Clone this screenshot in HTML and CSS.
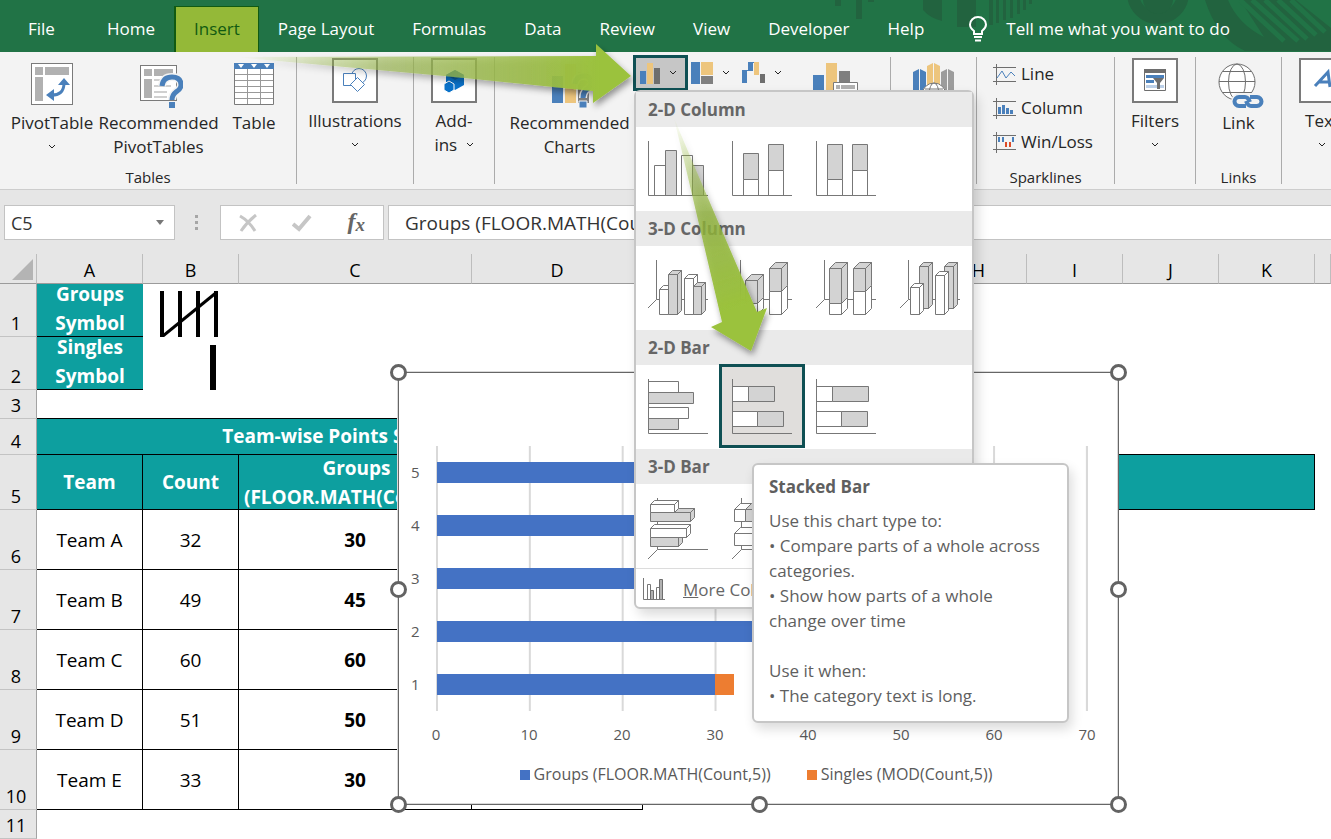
FILE: index.html
```html
<!DOCTYPE html>
<html lang="en">
<head>
<meta charset="UTF-8">
<meta name="viewport" content="width=device-width, initial-scale=1.0">
<title>Team-wise Points</title>
<link rel="stylesheet" href="styles.css">
</head>
<body>
<header class="tabs">
    <svg class="tabs-art" width="511" height="52" viewBox="0 0 511 52">
        <g fill="#22633f">
            <path d="M15 0h6v6h-6zM36 0h6v19h-6zM48 0h6v2h-6zM103 0h19v21q-12-3-19-11zM137 0h19v27h-19zM169 0h4v25h-4zM176 0h3v23h-3zM183 0h3v20h-3zM190 0h3v18h-3zM197 0h3v14h-3zM203 0h3v10h-3zM209 0h3v4h-3z"/>
            <path d="M385 0q12 38 40 51h86V0z"/>
        </g>
        <circle cx="338" cy="-7" r="25" fill="none" stroke="#22633f" stroke-width="12"/>
        <circle cx="338" cy="-1" r="15" fill="#22633f"/>
        <path d="M408 0q10 24 36 37L420 0z" fill="#217346"/>
        <path d="M420 0l44 41M432 0l46 41M445 0l42 39M458 0l38 35M471 0l34 32" stroke="#217346" stroke-width="5"/>
        <path d="M476 0h35v28z" fill="#217346"/>
    </svg>
    <nav class="tab-list">
        <button class="tab tab-file">File</button>
        <button class="tab">Home</button>
        <button class="tab active">Insert</button>
        <button class="tab">Page Layout</button>
        <button class="tab">Formulas</button>
        <button class="tab">Data</button>
        <button class="tab">Review</button>
        <button class="tab">View</button>
        <button class="tab">Developer</button>
        <button class="tab">Help</button>
    </nav>
    <button class="tell-me">
        <svg width="20" height="26" viewBox="0 0 20 26" fill="none" stroke="#fff" stroke-width="2"><path d="M6 18v-3Q2 12 2 8.500a8 7.500 0 0 1 16 0Q18 12 14 15v3z"/><path d="M6 21h8M7 24.500h6"/></svg>
        Tell me what you want to do
    </button>
</header>

<section class="ribbon">
    <div class="group group-tables">
        <div class="tools">
            <button class="tool pivot">
                <svg width="42" height="42" viewBox="0 0 42 42"><rect x=".5" y=".5" width="41" height="41" fill="#fff" stroke="#7a7a7a"/><path d="M4 4h8v8H4zM14 4h24v8H14zM4 14h8v24H4z" fill="#b1b1b1"/><path d="M19 32q14 1 14-12" fill="none" stroke="#4a80bb" stroke-width="3"/><path d="M15 32l8-6v12zM27 22l6-7 6 7z" fill="#4a80bb"/></svg>
                <span>PivotTable</span>
                <svg class="chev" width="8" height="6" viewBox="0 0 8 6"><path d="M1 1l3 3 3-3"/></svg>
            </button>
            <button class="tool rec-pivot">
                <svg width="44" height="46" viewBox="0 0 44 46"><rect x="1.500" y="2.500" width="36" height="35" fill="#fff" stroke="#7a7a7a"/><path d="M5 6h8v7H5zM15 6h19v7H15zM5 16h8v19H5z" fill="#b1b1b1"/><path d="M15 17h14M15 23h17M15 29h13M15 34h13" stroke="#d0d0d0" stroke-width="2"/><path d="M23 23q1-9 10-9t9 8q0 4-5 7-4 3-4 8" fill="none" stroke="#f3f3f3" stroke-width="8"/><path d="M23 23q1-9 10-9t9 8q0 4-5 7-4 3-4 8" fill="none" stroke="#4a80bb" stroke-width="5"/><path d="M30 39h6v6h-6z" fill="#4a80bb"/></svg>
                <span>Recommended<br>PivotTables</span>
            </button>
            <button class="tool table-tool">
                <svg width="40" height="42" viewBox="0 0 40 42"><path d="M.5 5.500h39v36H.5z" fill="#fff" stroke="#7a7a7a"/><path d="M13.500 6v35M26.500 6v35M1 11.500h38M1 17.500h38M1 23.500h38M1 29.500h38M1 35.500h38" stroke="#999"/><path d="M0 0h40v6H0z" fill="#4a80bb"/><path d="M4 1h6L7 5zM17 1h6l-3 4zM30 1h6l-3 4z" fill="#fff"/></svg>
                <span>Table</span>
            </button>
        </div>
        <div class="group-name">Tables</div>
    </div>
    <div class="group group-illus">
        <button class="tool boxed">
            <svg width="46" height="45" viewBox="0 0 46 45"><path d="M1 1h44v43H1z" fill="#fff" stroke="#7a7a7a" stroke-width="2"/><g fill="#fff" stroke="#4a80bb"><circle cx="27" cy="18" r="7.500"/><path d="M11.500 15.500h12v12h-12z"/><path d="M25.500 19.500l7 7-7 7-7-7z"/></g></svg>
            <span>Illustrations</span>
            <svg class="chev" width="8" height="6" viewBox="0 0 8 6"><path d="M1 1l3 3 3-3"/></svg>
        </button>
    </div>
    <div class="group group-addins">
        <button class="tool boxed">
            <svg width="46" height="45" viewBox="0 0 46 45"><path d="M1 1h44v43H1z" fill="#fff" stroke="#7a7a7a" stroke-width="2"/><path d="M24 12l9 5v10l-9 5-9-5V17z" fill="#0a72c9"/><path d="M24 12l9 5-9 5-9-5z" fill="#0c5c9c"/><path d="M18 23l5 3v6l-5 3-5-3v-6z" fill="#0a72c9" stroke="#fff"/></svg>
            <span>Add-<br>ins <svg class="chev" width="8" height="6" viewBox="0 0 8 6"><path d="M1 1l3 3 3-3"/></svg></span>
        </button>
    </div>
    <div class="group group-charts">
        <div class="tools">
            <button class="tool rec-charts">
                <svg width="40" height="46" viewBox="0 0 40 46"><path d="M0 13h11v27H0z" fill="#4a80bb"/><path d="M13 1h11v39H13z" fill="#edc57d"/><path d="M26 9h11v31H26z" fill="#7f7f7f"/><path d="M23 21q1-8 9-8 7 0 7 7 0 4-5 7-3 3-3 8" fill="none" stroke="#f3f3f3" stroke-width="8"/><path d="M23 21q1-8 9-8 7 0 7 7 0 4-5 7-3 3-3 8" fill="none" stroke="#4a80bb" stroke-width="5"/><path d="M27 38h8v7h-8z" fill="#4a80bb" stroke="#f3f3f3"/></svg>
                <span>Recommended<br>Charts</span>
            </button>
            <button class="mini-tool open" aria-label="Insert Column or Bar Chart">
                <svg width="20" height="21" viewBox="0 0 20 21"><path d="M0 8h6v13H0z" fill="#4a80bb"/><path d="M7 0h6v21H7z" fill="#edc57d"/><path d="M14 5h6v16h-6z" fill="#6e6e6e"/></svg>
                <svg class="chev" width="8" height="6" viewBox="0 0 8 6"><path d="M1 1l3 3 3-3"/></svg>
            </button>
            <button class="mini-tool" aria-label="Insert Hierarchy Chart">
                <svg width="22" height="22" viewBox="0 0 22 22"><path d="M0 0h9v22H0z" fill="#4a80bb"/><path d="M10 0h12v13H10z" fill="#edc57d"/><path d="M10 14h12v8H10z" fill="#7f7f7f"/></svg>
                <svg class="chev" width="8" height="6" viewBox="0 0 8 6"><path d="M1 1l3 3 3-3"/></svg>
            </button>
            <button class="mini-tool" aria-label="Insert Waterfall Chart">
                <svg width="23" height="22" viewBox="0 0 23 22"><path d="M0 8h5v13H0zM6 0h5v9H6zM4 8h3v1H4zM10 0h3v1h-3z" fill="#4a80bb"/><path d="M12 0h5v13h-5z" fill="#edc57d"/><path d="M18 12h5v9h-5z" fill="#6e6e6e"/></svg>
                <svg class="chev" width="8" height="6" viewBox="0 0 8 6"><path d="M1 1l3 3 3-3"/></svg>
            </button>
            <button class="tool pivot-chart" aria-label="PivotChart">
                <svg width="45" height="42" viewBox="0 0 45 42"><path d="M0 12h11v29H0z" fill="#4a80bb"/><path d="M13 0h11v41H13z" fill="#edc57d"/><path d="M26 8h11v12H26z" fill="#7f7f7f"/><path d="M20.500 19.500h24v22h-24z" fill="#fff" stroke="#7a7a7a"/><path d="M23 22h4v4h-4zM28 22h14v4H28z" fill="#b1b1b1"/></svg>
            </button>
        </div>
    </div>
    <div class="group group-tours">
        <button class="tool map-tool" aria-label="3D Map">
            <svg width="42" height="44" viewBox="0 0 42 44"><path d="M0 9l6-3v34H0zM7 6l6 3v31H7z" fill="#4a80bb"/><path d="M14 3l6-3v40h-6zM21 0l6 3v37h-6z" fill="#edc57d"/><path d="M28 9l6-3v34h-6zM35 6l6 3v31h-6z" fill="#9c9c9c"/><circle cx="21" cy="32" r="12" fill="#fff" stroke="#7a7a7a"/><ellipse cx="21" cy="32" rx="5" ry="12" fill="none" stroke="#7a7a7a"/><path d="M12 26h18" stroke="#7a7a7a"/></svg>
        </button>
    </div>
    <div class="group group-spark">
        <div class="spark-list">
            <button class="spark">
                <svg width="23" height="21" viewBox="0 0 23 21" fill="none"><path d="M3.500 0v21M0 3.500h23M0 17.500h23" stroke="#6e6e6e"/><path d="M4 14l5-7 4 7 5-6 4 4" stroke="#4a80bb"/></svg>
                <span>Line</span>
            </button>
            <button class="spark">
                <svg width="23" height="21" viewBox="0 0 23 21"><path d="M3.500 0v21M0 3.500h23M0 17.500h23" stroke="#6e6e6e"/><path d="M5 9h3v7H5zM9 7h3v9H9zM13 10h3v6h-3zM17 12h3v4h-3z" fill="#4a80bb"/></svg>
                <span>Column</span>
            </button>
            <button class="spark">
                <svg width="23" height="21" viewBox="0 0 23 21"><path d="M3.500 0v21M0 3.500h23M0 17.500h23" stroke="#6e6e6e"/><path d="M5 5h2v5H5zM9 5h2v5H9zM19 5h2v5h-2z" fill="#4a80bb"/><path d="M12 10h2v5h-2zM16 10h2v5h-2z" fill="#dd4b27"/></svg>
                <span>Win/Loss</span>
            </button>
        </div>
        <div class="group-name">Sparklines</div>
    </div>
    <div class="group group-filters">
        <button class="tool boxed">
            <svg width="46" height="45" viewBox="0 0 46 45"><path d="M1 1h44v43H1z" fill="#fff" stroke="#7a7a7a" stroke-width="2"/><path d="M12.500 11.500h21v21h-21z" fill="#fff" stroke="#6e6e6e"/><path d="M12 11h22v4H12z" fill="#6e6e6e"/><path d="M14 17h18v3H14zM14 22h8v3h-8z" fill="#4a80bb"/><path d="M14 27h18v3H14z" fill="#bcd0e8"/><path d="M21 20h11l-4 5v6h-3v-6z" fill="#6e6e6e"/></svg>
            <span>Filters</span>
            <svg class="chev" width="8" height="6" viewBox="0 0 8 6"><path d="M1 1l3 3 3-3"/></svg>
        </button>
    </div>
    <div class="group group-links">
        <button class="tool link-tool">
            <svg width="46" height="46" viewBox="0 0 46 46" fill="none"><g stroke="#6e6e6e"><circle cx="19" cy="19" r="18" fill="#fff"/><ellipse cx="19" cy="19" rx="8.500" ry="18"/><path d="M1 18.500h36M5 8.500h28M5 29.500h28"/></g><g stroke="#f3f3f3" stroke-width="8"><rect x="17" y="34" width="15" height="9" rx="4.500"/><rect x="28" y="34" width="15" height="9" rx="4.500"/></g><g stroke="#4a80bb" stroke-width="4"><path d="M28 43h-7a4.500 4.500 0 0 1 0-9h6q3 0 5 5"/><path d="M32 34h7a4.500 4.500 0 0 1 0 9h-6q-3 0-5-5"/></g></svg>
            <span>Link</span>
        </button>
        <div class="group-name">Links</div>
    </div>
    <div class="group group-text">
        <button class="tool boxed">
            <svg width="46" height="45" viewBox="0 0 46 45"><path d="M1 1h44v43H1z" fill="#fff" stroke="#7a7a7a" stroke-width="2"/><path d="M16 28l13-14 2 15M20 24h10" fill="none" stroke="#4a80bb" stroke-width="3"/></svg>
            <span>Text</span>
            <svg class="chev" width="8" height="6" viewBox="0 0 8 6"><path d="M1 1l3 3 3-3"/></svg>
        </button>
    </div>
</section>

<section class="formula-bar">
    <div class="name-box">
        <input type="text" value="C5" aria-label="Name box">
        <button aria-label="Choose a name"><svg width="8" height="5" viewBox="0 0 8 5"><path d="M0 0h8L4 5z" fill="#777"/></svg></button>
    </div>
    <svg class="dots" width="3" height="16" viewBox="0 0 3 16"><path d="M0 0h3v3H0zM0 6h3v3H0zM0 12h3v3H0z" fill="#a6a6a6"/></svg>
    <div class="fx-box">
        <button aria-label="Cancel"><svg width="18" height="18" viewBox="0 0 18 18" fill="none" stroke="#c6c6c6" stroke-width="3"><path d="M1 2q9 5 15 15M17 1Q8 8 2 17"/></svg></button>
        <button aria-label="Enter"><svg width="20" height="18" viewBox="0 0 20 18" fill="none" stroke="#c6c6c6" stroke-width="4"><path d="M1 10l6 5L18 2"/></svg></button>
        <button class="fx" aria-label="Insert function">f<sub>x</sub></button>
    </div>
    <input class="formula" type="text" value="Groups (FLOOR.MATH(Count,5))" aria-label="Formula">
</section>

<main class="sheet">
    <table class="grid">
        <colgroup>
            <col class="c-head"><col class="c-a"><col class="c-b"><col class="c-c"><col class="c-d">
            <col class="c-std"><col class="c-std"><col class="c-std"><col class="c-std"><col class="c-std"><col class="c-std"><col class="c-std"><col>
        </colgroup>
        <thead>
            <tr><th class="corner"><svg width="21" height="21" viewBox="0 0 21 21"><path d="M21 0v21H0z" fill="#b4b4b4"/></svg></th><th>A</th><th>B</th><th>C</th><th>D</th><th>E</th><th>F</th><th>G</th><th>H</th><th>I</th><th>J</th><th>K</th><th></th></tr>
        </thead>
        <tbody>
            <tr class="r-symbol"><th>1</th><td class="teal"><span class="wrap">Groups<br>Symbol</span></td><td class="tally"><svg width="95" height="52" viewBox="0 0 95 52" stroke="#000" stroke-width="4"><path d="M19 6v46M37 6v46M55 6v46M73 6v46"/><path d="M20 51L74 7" stroke-width="3"/></svg></td><td colspan="10"></td></tr>
            <tr class="r-symbol"><th>2</th><td class="teal"><span class="wrap">Singles<br>Symbol</span></td><td class="tally"><svg width="95" height="52" viewBox="0 0 95 52"><path d="M67 7h6v45h-6z"/></svg></td><td colspan="10"></td></tr>
            <tr class="r-short"><th>3</th><td class="b-bottom" colspan="4"></td><td colspan="8"></td></tr>
            <tr class="r-title"><th>4</th><td class="teal b-right" colspan="4">Team-wise Points Scored</td><td class="b-bottom" colspan="7"></td><td></td></tr>
            <tr class="r-fields"><th>5</th><td class="teal b-right">Team</td><td class="teal b-right">Count</td><td class="teal b-right"><span class="wrap">Groups<br>(FLOOR.MATH(Count,5))</span></td><td class="teal b-right"></td><td class="teal b-right" colspan="7"></td><td></td></tr>
            <tr class="r-data"><th>6</th><td>Team A</td><td>32</td><td>30</td><td></td></tr>
            <tr class="r-data"><th>7</th><td>Team B</td><td>49</td><td>45</td><td></td></tr>
            <tr class="r-data"><th>8</th><td>Team C</td><td>60</td><td>60</td><td></td></tr>
            <tr class="r-data"><th>9</th><td>Team D</td><td>51</td><td>50</td><td></td></tr>
            <tr class="r-data"><th>10</th><td>Team E</td><td>33</td><td>30</td><td></td></tr>
            <tr class="r-short"><th>11</th><td colspan="12"></td></tr>
        </tbody>
    </table>

    <div class="chart">
        <div class="plot-row">
            <div class="y-labels"><span>5</span><span>4</span><span>3</span><span>2</span><span>1</span></div>
            <div class="plot">
                <div class="bar"><i class="groups" style="width: 42.86%"></i><i class="singles" style="width: 4.29%"></i></div>
                <div class="bar"><i class="groups" style="width: 71.43%"></i><i class="singles" style="width: 1.43%"></i></div>
                <div class="bar"><i class="groups" style="width: 85.71%"></i></div>
                <div class="bar"><i class="groups" style="width: 64.29%"></i><i class="singles" style="width: 5.71%"></i></div>
                <div class="bar"><i class="groups" style="width: 42.86%"></i><i class="singles" style="width: 2.86%"></i></div>
            </div>
        </div>
        <div class="x-labels"><span>0</span><span>10</span><span>20</span><span>30</span><span>40</span><span>50</span><span>60</span><span>70</span></div>
        <div class="legend">
            <span><i class="groups"></i>Groups (FLOOR.MATH(Count,5))</span>
            <span><i class="singles"></i>Singles (MOD(Count,5))</span>
        </div>
        <b class="handle top left"></b><b class="handle top right"></b>
        <b class="handle mid left"></b><b class="handle mid right"></b>
        <b class="handle bottom left"></b><b class="handle bottom center"></b><b class="handle bottom right"></b>
    </div>
</main>

<div class="menu">
    <h2>2-D Column</h2>
    <div class="choices">
        <button aria-label="Clustered Column"><svg width="84" height="84" viewBox="0 0 84 84"><path class="w" d="M18.500 38.500h11v30h-11zM45.500 28.500h11v40h-11z"/><path class="g" d="M29.500 23.500h11v45h-11zM56.500 38.500h11v30h-11z"/><path class="ax" d="M12.500 14v54.500H72"/></svg></button>
        <button aria-label="Stacked Column"><svg width="84" height="84" viewBox="0 0 84 84"><path class="w" d="M23.500 52.500h15v16h-15zM48.500 43.500h15v25h-15z"/><path class="g" d="M23.500 26.500h15v26h-15zM48.500 17.500h15v26h-15z"/><path class="ax" d="M12.500 14v54.500H72"/></svg></button>
        <button aria-label="100% Stacked Column"><svg width="84" height="84" viewBox="0 0 84 84"><path class="w" d="M23.500 52.500h15v16h-15zM48.500 43.500h15v25h-15z"/><path class="g" d="M23.500 17.500h15v35h-15zM48.500 17.500h15v26h-15z"/><path class="ax" d="M12.500 14v54.500H72"/></svg></button>
    </div>
    <h2>3-D Column</h2>
    <div class="choices">
        <button aria-label="3-D Clustered Column"><svg width="84" height="84" viewBox="0 0 84 84"><path class="ax" d="M20.500 14v39.500L12 62M20.500 53.500H72"/><path class="w" d="M23.500 43.500v25h9v-25zl4-4h9l-4 4M48.500 32.500v36h9v-36zl4-4h9l-4 4M61.500 28.500v36l-4 4v-36z"/><path class="g" d="M32.500 28.500v40h9v-40zl4-4h9l-4 4M45.500 24.500v40l-4 4v-40zM57.500 40.500v28h8v-28zl4-4h8l-4 4M69.500 36.500v28l-4 4v-28z"/></svg></button>
        <button aria-label="3-D Stacked Column"><svg width="84" height="84" viewBox="0 0 84 84"><path class="ax" d="M20.500 14v39.500L12 62M20.500 53.500H72"/><path class="w" d="M25.500 57.500h12v11h-12zM37.500 57.500l6-6v11l-6 6zM49.500 45.500h12v23h-12zM61.500 45.500l6-6v23l-6 6z"/><path class="g" d="M25.500 34.500h12v23h-12zl6-6h12l-6 6M43.500 28.500v23l-6 6v-23zM49.500 22.500h12v23h-12zl6-6h12l-6 6M67.500 16.500v23l-6 6v-23z"/></svg></button>
        <button aria-label="3-D 100% Stacked Column"><svg width="84" height="84" viewBox="0 0 84 84"><path class="ax" d="M20.500 14v39.500L12 62M20.500 53.500H72"/><path class="w" d="M25.500 57.500h12v11h-12zM37.500 57.500l6-6v11l-6 6zM49.500 45.500h12v23h-12zM61.500 45.500l6-6v23l-6 6z"/><path class="g" d="M25.500 22.500h12v35h-12zl6-6h12l-6 6M43.500 16.500v35l-6 6v-35zM49.500 22.500h12v23h-12zl6-6h12l-6 6M67.500 16.500v23l-6 6v-23z"/></svg></button>
        <button aria-label="3-D Column"><svg width="84" height="84" viewBox="0 0 84 84"><path class="ax" d="M20.500 14v39.500L12 62M20.500 53.500H72"/><path class="g" d="M31.500 20.500h9v42h-9zl4-4h9l-4 4M44.500 16.500v42l-4 4v-42zM56.500 20.500h9v42h-9zl4-4h9l-4 4M69.500 16.500v42l-4 4v-42z"/><path class="w" d="M22.500 41.500h9v27h-9zl4-4h9l-4 4M35.500 37.500v27l-4 4v-27zM47.500 29.500h9v39h-9zl4-4h9l-4 4M60.500 25.500v39l-4 4v-39z"/></svg></button>
    </div>
    <h2>2-D Bar</h2>
    <div class="choices">
        <button aria-label="Clustered Bar"><svg width="84" height="84" viewBox="0 0 84 84"><path class="w" d="M12.500 16.500h30v11h-30zM12.500 42.500h40v11h-40z"/><path class="g" d="M12.500 27.500h45v11h-45zM12.500 53.500h30v11h-30z"/><path class="ax" d="M12.500 14v54.500H72"/></svg></button>
        <button class="selected" aria-label="Stacked Bar"><svg width="84" height="82" viewBox="0 0 84 82"><path class="w" d="M12.500 21.500h16v15h-16zM12.500 46.500h25v15h-25z"/><path class="g" d="M28.500 21.500h26v15h-26zM37.500 46.500h26v15h-26z"/><path class="ax" d="M12.500 14v54.500H72"/></svg></button>
        <button aria-label="100% Stacked Bar"><svg width="84" height="84" viewBox="0 0 84 84"><path class="w" d="M12.500 21.500h16v15h-16zM12.500 46.500h25v15h-25z"/><path class="g" d="M28.500 21.500h36v15h-36zM37.500 46.500h26v15h-26z"/><path class="ax" d="M12.500 14v54.500H72"/></svg></button>
    </div>
    <h2>3-D Bar</h2>
    <div class="choices">
        <button aria-label="3-D Clustered Bar"><svg width="84" height="84" viewBox="0 0 84 84"><path class="ax" d="M21.500 14v51.500L12 75M21.500 65.500H72"/><path class="g" d="M14.500 28.500h40v9h-40zl4-4h40l-4 4M58.500 24.500v9l-4 4v-9zM14.500 53.500h28v9h-28zM42.500 53.500l4-4v9l-4 4z"/><path class="w" d="M14.500 20.500h24v8h-24zl4-4h24l-4 4M42.500 16.500v8l-4 4v-8zM14.500 44.500h36v9h-36zl4-4h36l-4 4M54.500 40.500v9l-4 4v-9z"/></svg></button>
        <button aria-label="3-D Stacked Bar"><svg width="84" height="84" viewBox="0 0 84 84"><path class="ax" d="M21.500 14v51.500L12 75M21.500 65.500H72"/><path class="w" d="M14.500 25.500h11v12h-11zl6-6h11l-6 6M14.500 49.500h30v12h-30zl6-6h30l-6 6"/><path class="g" d="M25.500 25.500h20v12h-20zl6-6h20l-6 6"/></svg></button>
    </div>
    <button class="more">
        <svg width="22" height="22" viewBox="0 0 22 22"><path class="w" d="M4.500 6.500h3v15h-3zM13.500 9.500h3v12h-3z"/><path d="M7.500 12.500h3v9h-3zM16.500 1.500h3v20h-3z" fill="#b1b1b1" stroke="#6e6e6e"/><path class="ax" d="M.5 0v21.500H22"/></svg>
        <span><u>M</u>ore Column Charts...</span>
    </button>
</div>

<div class="tooltip" role="tooltip">
    <strong>Stacked Bar</strong>
    <p>Use this chart type to:<br>• Compare parts of a whole across categories.<br>• Show how parts of a whole change over time</p>
    <p>Use it when:<br>• The category text is long.</p>
</div>

<svg class="arrows" width="800" height="400" viewBox="0 0 800 400">
    <defs>
        <linearGradient id="right" gradientUnits="userSpaceOnUse" x1="240" y1="0" x2="600" y2="0"><stop offset="0" stop-color="#9bc23c" stop-opacity="0"/><stop offset=".4" stop-color="#9bb850" stop-opacity=".6"/><stop offset=".8" stop-color="#9bbc45" stop-opacity=".85"/><stop offset="1" stop-color="#9bc23c"/></linearGradient>
        <linearGradient id="down" gradientUnits="userSpaceOnUse" x1="674" y1="118" x2="730" y2="310"><stop offset="0" stop-color="#9bc23c" stop-opacity="0"/><stop offset=".5" stop-color="#8fb23a" stop-opacity=".75"/><stop offset="1" stop-color="#9bc23c"/></linearGradient>
        <filter id="shade" x="-10%" y="-30%" width="120%" height="180%"><feDropShadow dx="2" dy="4" stdDeviation="3" flood-opacity=".4"/></filter>
    </defs>
    <path filter="url(#shade)" fill="url(#right)" d="M235 57L596 56V44L631 76 593 103V91L444 76z"/>
    <path filter="url(#shade)" fill="url(#down)" d="M674 118L722 322 711 327 751 351 767 308 757 312Q700 180 674 118z"/>
</svg>
</body>
</html>
```
FILE: styles.css
```css
* {
    box-sizing: border-box;
}
body {
    margin: 0;
    height: 100vh;
    display: flex;
    flex-direction: column;
    overflow: hidden;
    position: relative;
    background: #fff;
    color: #262626;
    font-family: "Open Sans", "Noto Sans", sans-serif;
    font-size: 17px;
}
button,
input {
    font: inherit;
    color: inherit;
    background: none;
    border: none;
    padding: 0;
    margin: 0;
}
svg {
    flex: none;
}

/* tab strip */
.tabs {
    position: relative;
    display: flex;
    height: 52px;
    background: #217346;
    color: #fff;
    white-space: nowrap;
}
.tabs-art {
    position: absolute;
    right: 0;
    top: 0;
}
.tab-list {
    display: flex;
    padding: 6px 0 0 9px;
}
.tab {
    padding: 0 18px 2px;
    border: 1px solid transparent;
    border-bottom: none;
}
.tab-file {
    padding-right: 32px;
}
.tab.active {
    background: #94b938;
    border-color: #115a12;
    border-left-width: 2px;
    color: #115a12;
}
.tell-me {
    position: relative;
    display: flex;
    align-items: center;
    gap: 18px;
    padding: 5px 0 0 25px;
}

/* ribbon */
.ribbon {
    display: flex;
    height: 138px;
    padding: 5px 0;
    background: #f3f3f3;
    border-bottom: 1px solid #cdcdcd;
}
.group {
    flex: none;
    display: flex;
    flex-direction: column;
    justify-content: space-between;
    align-items: center;
    border-right: 1px solid #ababab;
}
.group-tables { width: 297px; }
.group-illus { width: 117px; }
.group-addins { width: 81px; }
.group-charts { width: 396px; }
.group-tours { width: 86px; }
.group-spark { width: 138px; }
.group-filters { width: 81px; }
.group-links { width: 86px; }
.group-text { width: 80px; border-right: none; }
.group-name {
    font-size: 15px;
    line-height: 13px;
}
.tools {
    display: flex;
    align-items: flex-start;
    align-self: stretch;
    padding-left: 6px;
}
.tool {
    display: flex;
    flex-direction: column;
    align-items: center;
    padding-top: 6px;
    line-height: 24px;
}
.tool span {
    margin-top: 4px;
    text-align: center;
}
.tool > svg:first-child {
    margin-bottom: 2px;
}
.boxed {
    padding-top: 1px;
}
.chev {
    fill: none;
    stroke: #222;
}
.tool > .chev {
    margin-top: 9px;
}
.tool span .chev {
    margin: 0 0 3px 4px;
}
.pivot { width: 92px; }
.rec-pivot { width: 121px; }
.rec-pivot > svg:first-child,
.rec-charts > svg:first-child,
.link-tool > svg:first-child {
    margin: 0 0 -2px 4px;
}
.table-tool { width: 70px; }
.rec-charts {
    width: 132px;
    padding-left: 5px;
}
.mini-tool {
    display: flex;
    align-items: center;
    gap: 9px;
    height: 32px;
    width: 51px;
    padding-left: 3px;
}
.mini-tool.open {
    width: 55px;
    height: 36px;
    margin-top: -2px;
    padding-left: 4px;
    background: #c6c6c6;
    border: 3px solid #0f5054;
}
.pivot-chart {
    width: 90px;
}
.spark-list {
    display: flex;
    flex-direction: column;
    align-self: stretch;
    padding-left: 16px;
}
.spark {
    display: flex;
    align-items: center;
    gap: 5px;
    height: 34px;
}
.spark span {
    padding-bottom: 2px;
}

/* formula bar */
.formula-bar {
    display: flex;
    align-items: center;
    padding: 15px 0 14px 4px;
    background: #e6e6e6;
    color: #333;
    font-size: 19px;
}
.name-box,
.fx-box,
.formula {
    height: 35px;
    background: #fff;
    border: 1px solid #c3c3c3;
}
.name-box {
    display: flex;
    width: 171px;
    padding: 0 10px 0 6px;
}
.name-box input {
    flex: 1;
    min-width: 0;
    font-size: 18px;
}
.name-box button {
    display: flex;
    align-items: center;
}
.dots {
    margin: 0 22px 0 20px;
}
.fx-box {
    display: flex;
    align-items: center;
    justify-content: space-between;
    width: 164px;
    padding: 0 18px;
    margin-right: 4px;
}
.fx-box button {
    display: flex;
    align-items: center;
}
.fx-box .fx {
    display: block;
    font: italic bold 24px/24px "Liberation Serif", serif;
    color: #666;
}
.fx sub {
    font-size: 19px;
    vertical-align: -2px;
}
.formula {
    flex: 1;
    min-width: 0;
    border-right: none;
    padding-left: 16px;
    font-size: 19px;
}

/* worksheet */
.sheet {
    flex: 1;
    position: relative;
    overflow: hidden;
    color: #000;
}
.grid {
    width: 100%;
    table-layout: fixed;
    border-collapse: separate;
    border-spacing: 0;
    font-size: 19px;
    line-height: 29px;
    text-align: center;
}
.c-head { width: 37px; }
.c-a { width: 106px; }
.c-b { width: 96px; }
.c-c { width: 233px; }
.c-d { width: 171px; }
.c-std { width: 96px; }
.grid th,
.grid td {
    padding: 0;
    white-space: nowrap;
}
.grid th {
    background: #e6e6e6;
    font-size: 18px;
    font-weight: normal;
    border-right: 1px solid #a3a3a3;
}
.grid thead th {
    height: 30px;
    line-height: 25px;
    vertical-align: bottom;
    border-bottom: 1px solid #9b9b9b;
    border-right-color: #bdbdbd;
}
.grid .corner {
    line-height: 0;
    padding: 0 3px 3px 0;
    text-align: right;
}
.grid tbody th {
    line-height: 25px;
    vertical-align: bottom;
    padding-right: 4px;
    border-bottom: 1px solid #c3c3c3;
}
.r-symbol { height: 53px; }
.r-short { height: 29px; }
.r-title { height: 36px; }
.r-fields { height: 55px; }
.r-data { height: 60px; }
.grid .teal {
    background: #0d9f9f;
    color: #fff;
    font-weight: bold;
    border-bottom: 1px solid #000;
}
.wrap {
    display: block;
    margin: -4px 0 -2px;
}
.r-fields .wrap {
    margin: -2px 0 -3px;
    padding-left: 3px;
}
.tally svg {
    display: block;
}
.b-bottom {
    border-bottom: 1px solid #000;
}
.b-right {
    border-right: 1px solid #000;
}
.r-data td {
    padding-top: 2px;
    border-right: 1px solid #000;
    border-bottom: 1px solid #000;
}
.r-data td:nth-child(4) {
    font-weight: bold;
}

/* chart object */
.chart {
    position: absolute;
    left: 398px;
    top: 118px;
    width: 721px;
    padding: 73px 30px 19px 12px;
    background: #fff;
    border: 1px solid #666;
    box-shadow: -1px -1px 0 #d9d9d9, inset -1px -1px 0 #d9d9d9;
    color: #595959;
    font-size: 15px;
}
.plot-row {
    display: flex;
}
.y-labels {
    width: 25px;
    display: flex;
    flex-direction: column;
    line-height: 53px;
}
.plot {
    flex: 1;
    border-right: 2px solid #d9d9d9;
    background: linear-gradient(to right, #d9d9d9 2px, transparent 2px) 0 0 / calc(100% / 7) 100%;
}
.bar {
    display: flex;
    height: 53px;
    padding: 16px 0;
    margin-left: 1px;
}
.groups {
    background: #4472c4;
}
.singles {
    background: #ed7d31;
}
.x-labels {
    display: flex;
    justify-content: space-between;
    margin: 12px -19px 0 5px;
    line-height: 22px;
}
.x-labels span {
    width: 40px;
    text-align: center;
}
.legend {
    display: flex;
    justify-content: center;
    gap: 36px;
    margin-top: 18px;
    padding-left: 13px;
    font-size: 16px;
    line-height: 22px;
}
.legend i {
    display: inline-block;
    width: 10px;
    height: 10px;
    margin-right: 4px;
}
.handle {
    position: absolute;
    width: 17px;
    height: 17px;
    border: 3px solid #636363;
    border-radius: 50%;
    background: #fff;
}
.handle.left { left: -9px; }
.handle.right { right: -9px; }
.handle.center { left: calc(50% - 8px); }
.handle.top { top: -9px; }
.handle.mid { top: calc(50% - 8px); }
.handle.bottom { bottom: -9px; }

/* chart type menu */
.menu {
    position: absolute;
    left: 634px;
    top: 90px;
    width: 340px;
    background: #fff;
    border: 2px solid #c6c6c6;
    border-radius: 6px;
    box-shadow: 4px 6px 12px rgba(0, 0, 0, 0.14);
    color: #666;
}
.menu h2 {
    margin: 0;
    padding-left: 12px;
    background: #eaeaea;
    font-size: 17px;
    line-height: 35px;
}
.choices {
    display: flex;
    align-items: flex-start;
    height: 84px;
}
.choices button {
    flex: none;
    width: 84px;
}
.choices svg {
    display: block;
}
.menu .w {
    fill: #fff;
    stroke: #777;
}
.menu .g {
    fill: #d3d3d3;
    stroke: #777;
}
.menu .ax {
    fill: none;
    stroke: #777;
}
.choices .selected {
    background: #e0dedc;
    outline: 3px solid #0f5054;
    outline-offset: -2px;
}
.more {
    display: flex;
    align-items: center;
    gap: 18px;
    width: 100%;
    height: 39px;
    padding: 2px 0 0 7px;
    border-top: 1px solid #dcdcdc;
}

/* screen tip */
.tooltip {
    position: absolute;
    left: 752px;
    top: 463px;
    width: 317px;
    padding: 9px 15px 13px;
    background: #fff;
    border: 2px solid #c6c6c6;
    border-radius: 6px;
    box-shadow: 3px 6px 12px rgba(0, 0, 0, 0.14);
    color: #5f5f5f;
    line-height: 25px;
}
.tooltip p {
    margin: 9px 0 0;
}
.tooltip p + p {
    margin-top: 25px;
}

/* pointer arrows drawn over the window */
.arrows {
    position: absolute;
    left: 0;
    top: 0;
    pointer-events: none;
}
```
